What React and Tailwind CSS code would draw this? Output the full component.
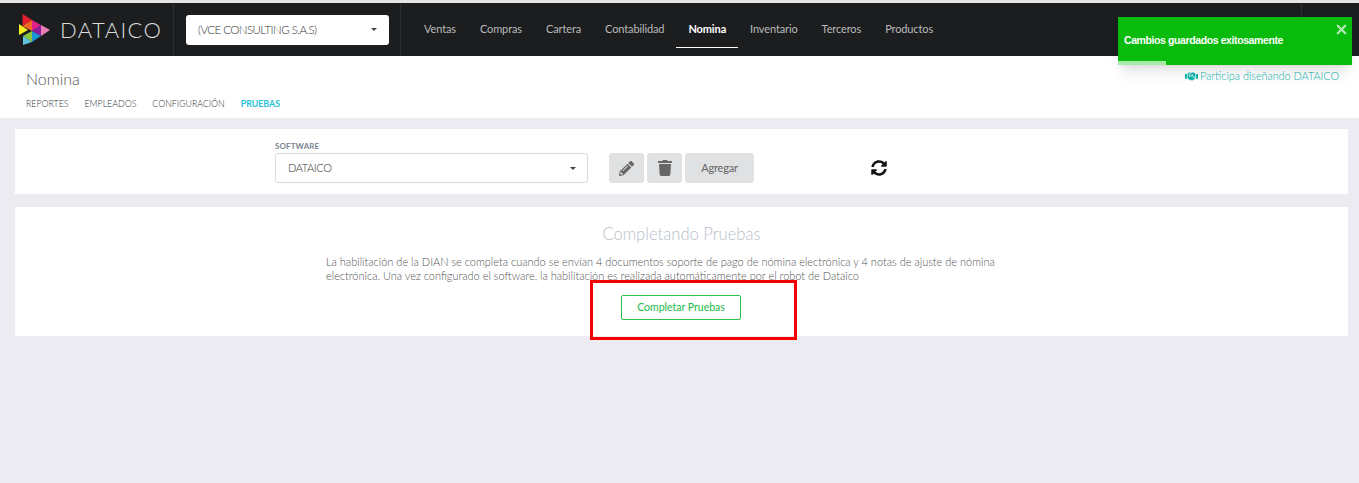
import React from "react";
import { FaPencilAlt, FaTrash, FaSyncAlt, FaHandshake } from "react-icons/fa";
import { X } from "lucide-react";

const navItems = ["Ventas", "Compras", "Cartera", "Contabilidad", "Nomina", "Inventario", "Terceros", "Productos"];
const tabs = ["REPORTES", "EMPLEADOS", "CONFIGURACIÓN", "PRUEBAS"];

function Logo() {
  return (
    <svg width="34" height="34" viewBox="17 14 34 34" className="shrink-0">
      <polygon points="22.5,15 32,21 22.5,27" fill="#e3202c" />
      <polygon points="32,21 22.5,27 32,32" fill="#f26522" />
      <polygon points="32,21 41,26 32,32" fill="#e0218a" />
      <polygon points="41,26 32,32 41,37" fill="#8e1f9c" />
      <polygon points="41,26 50,31 41,37" fill="#ee7fb5" />
      <polygon points="19,25 28,31 19,36" fill="#f7ee1f" />
      <polygon points="32,32 23,37 32,43" fill="#8cc63f" />
      <polygon points="32,32 41,37 32,43" fill="#1b95d3" />
      <polygon points="23,37 32,43 23,46" fill="#5ec4de" />
    </svg>
  );
}

function Caret() {
  return <span className="w-0 h-0 border-x-[3px] border-x-transparent border-t-[3px] border-t-[#444]" />;
}

export default function App() {
  return (
    <div className="relative h-[483px] overflow-hidden bg-[#ecebf1] font-['Lato',sans-serif] pt-[3px]">
      <div className="absolute top-0 left-0 right-0 h-[3px] bg-[#e6e6e6]" />

      <header className="h-[53px] bg-[#1c1d1f] flex items-center">
        <div className="w-[174px] h-full flex items-center pl-[17px] border-r border-[#2e2f31]">
          <Logo />
          <span className="ml-[9px] text-[22px] tracking-[1.4px] font-light text-[#dddddd] leading-none">DATAICO</span>
        </div>
        <div className="w-[227px] h-full flex items-center pl-[12px] border-r border-[#2e2f31]">
          <div className="w-[203px] h-[30px] bg-white rounded-[3px] flex items-center justify-between pl-[12px] pr-[12px]">
            <span className="text-[11.5px] font-light text-[#333] tracking-[-0.55px]">(VCE CONSULTING S.A.S)</span>
            <Caret />
          </div>
        </div>
        <nav className="flex h-full items-center pl-[11px]">
          {navItems.map((item) => (
            <div
              key={item}
              className={`relative h-full flex items-center px-[12px] text-[11px] tracking-[-0.12px] ${
                item === "Nomina" ? "font-bold text-white" : "text-[#b9babb]"
              }`}
            >
              {item}
              {item === "Nomina" && <span className="absolute left-0 right-0 bottom-[8px] h-px bg-white" />}
            </div>
          ))}
        </nav>
        <div className="ml-auto w-[58px] h-full border-l border-[#2e2f31]" />
      </header>

      <div className="h-[62px] bg-white pl-[26px] pr-[20px] flex justify-between">
        <div>
          <h1 className="mt-[13px] text-[16px] leading-[20px] font-light text-[#555]">Nomina</h1>
          <div className="mt-[9px] flex gap-[16px] text-[8.8px] leading-[12px] font-light text-[#333]">
            {tabs.map((tab) => (
              <span key={tab} className={tab === "PRUEBAS" ? "font-bold text-[#1fc1d8]" : ""}>
                {tab}
              </span>
            ))}
          </div>
        </div>
        <a className="mt-[13px] h-[14px] flex items-center gap-[2px] text-[10.8px] font-light text-[#12b5b0]">
          <FaHandshake className="text-[13px]" />
          Participa diseñando DATAICO
        </a>
      </div>

      <div className="px-[15px] pr-[11px] pt-[11px]">
        <section className="h-[65px] bg-white pl-[260px] pt-[13px] flex">
          <div className="w-[313px]">
            <div className="text-[8px] leading-[9px] font-bold text-[#7b8290] tracking-[0.1px]">SOFTWARE</div>
            <div className="mt-[2px] h-[30px] border border-[#d9d9de] rounded-[3px] flex items-center justify-between pl-[12px] pr-[11px]">
              <span className="text-[11px] font-light text-[#333] tracking-[-0.4px]">DATAICO</span>
              <Caret />
            </div>
          </div>
          <div className="ml-[21px] mt-[11px] flex gap-[3px] h-[30px] text-[#666]">
            <button className="w-[35px] bg-[#e0e1e2] rounded-[3px] flex items-center justify-center">
              <FaPencilAlt className="text-[15px]" />
            </button>
            <button className="w-[35px] bg-[#e0e1e2] rounded-[3px] flex items-center justify-center">
              <FaTrash className="text-[16px]" />
            </button>
            <button className="w-[69px] bg-[#e0e1e2] rounded-[3px] text-[11px] tracking-[-0.2px] text-[#666]">Agregar</button>
          </div>
          <div className="ml-[117px] mt-[11px] h-[30px] flex items-center">
            <FaSyncAlt className="text-[16px] text-[#111]" />
          </div>
        </section>

        <section className="mt-[13px] h-[129px] bg-white flex flex-col items-center">
          <h2 className="mt-[17px] text-[16.6px] leading-[20px] font-light text-[#b8c0cc]">Completando Pruebas</h2>
          <p className="mt-[11px] w-[711px] text-[10.97px] leading-[13.5px] font-light text-[#555]">
            La habilitación de la DIAN se completa cuando se envían 4 documentos soporte de pago de nómina electrónica y 4 notas de ajuste de nómina electrónica. Una vez configurado el software, la habilitación es realizada automáticamente por el robot de Dataico
          </p>
          <button className="mt-[13px] mr-[1px] w-[120px] h-[25px] border border-[#2ebd4e] rounded-[2px] text-[10.5px] text-[#21ba45]">
            Completar Pruebas
          </button>
        </section>
      </div>

      {/* marca roja sobre el boton */}
      <div className="absolute left-[590px] top-[280px] w-[207px] h-[60px] border-[3px] border-[#f50000]" />

      {/* toast */}
      <div className="absolute left-[1118px] top-[17px] w-[234px] h-[48px] bg-[#08bb0c] shadow-lg flex items-center pl-[6px]">
        <span className="text-[10.5px] font-bold tracking-[-0.4px] text-white font-['Liberation_Sans',sans-serif]">Cambios guardados exitosamente</span>
        <X size={15} strokeWidth={3.5} className="absolute right-[3px] top-[5px] text-[#b5ecb6]" />
        <div className="absolute left-0 bottom-0 h-[4px] w-[48px] bg-[#a8eba9]" />
      </div>
    </div>
  );
}
